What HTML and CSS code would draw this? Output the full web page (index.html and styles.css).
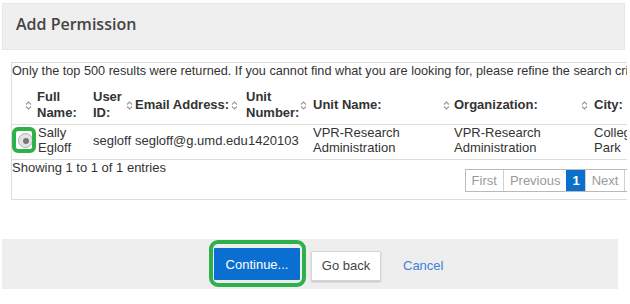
FILE: index.html
```html
<!DOCTYPE html>
<html lang="en">
<head>
    <meta charset="UTF-8">
    <meta name="viewport" content="width=device-width, initial-scale=1.0">
    <title>Add Permission</title>
    <link rel="stylesheet" href="styles.css">
</head>
<body>
    <div class="page">
        <div class="modal-header">
            <h2>Add Permission</h2>
        </div>

        <div class="modal-body">
            <div class="results">
                <p class="notice">Only the top 500 results were returned. If you cannot find what you are looking for, please refine the search criteria.</p>

                <!-- column headers -->
                <div class="table-head">
                    <span class="sort"><svg viewBox="0 0 7 11"><path d="M1 4.5 3.5 2 6 4.5M1 6.5 3.5 9 6 6.5"/></svg></span>
                    <span>Full<br>Name:</span>
                    <span>User<br>ID:</span>
                    <span class="sort"><svg viewBox="0 0 7 11"><path d="M1 4.5 3.5 2 6 4.5M1 6.5 3.5 9 6 6.5"/></svg></span>
                    <span>Email Address:</span>
                    <span class="sort"><svg viewBox="0 0 7 11"><path d="M1 4.5 3.5 2 6 4.5M1 6.5 3.5 9 6 6.5"/></svg></span>
                    <span>Unit<br>Number:</span>
                    <span class="sort"><svg viewBox="0 0 7 11"><path d="M1 4.5 3.5 2 6 4.5M1 6.5 3.5 9 6 6.5"/></svg></span>
                    <span>Unit Name:</span>
                    <span class="sort"><svg viewBox="0 0 7 11"><path d="M1 4.5 3.5 2 6 4.5M1 6.5 3.5 9 6 6.5"/></svg></span>
                    <span>Organization:</span>
                    <span class="sort"><svg viewBox="0 0 7 11"><path d="M1 4.5 3.5 2 6 4.5M1 6.5 3.5 9 6 6.5"/></svg></span>
                    <span>City:</span>
                </div>

                <div class="table-row">
                    <span class="pick"><span class="radio highlight"><span class="dot"></span></span></span>
                    <span>Sally<br>Egloff</span>
                    <span class="mid">segloff</span>
                    <span class="mid nowrap">segloff@g.umd.edu</span>
                    <span class="mid">1420103</span>
                    <span>VPR-Research<br>Administration</span>
                    <span>VPR-Research<br>Administration</span>
                    <span>College<br>Park</span>
                </div>

                <div class="table-foot">
                    <div class="info">Showing 1 to 1 of 1 entries</div>
                    <ul class="pager">
                        <li>First</li>
                        <li>Previous</li>
                        <li class="active">1</li>
                        <li>Next</li>
                        <li>Last</li>
                    </ul>
                </div>
            </div>
        </div>

        <div class="modal-footer">
            <span class="highlight wide"><button class="btn btn-primary">Continue...</button></span>
            <button class="btn btn-default">Go back</button>
            <a class="cancel" href="#">Cancel</a>
        </div>
    </div>
</body>
</html>
```

FILE: styles.css
```css
* {
    margin: 0;
    padding: 0;
    box-sizing: border-box;
}

body {
    font-family: "Liberation Sans", Arial, sans-serif;
    font-size: 13px;
    color: #333333;
    background: #ffffff;
    overflow: hidden;
}

.page {
    width: 627px;
    overflow: hidden;
}

.modal-header {
    margin: 3px 2px 0 2px;
    height: 47px;
    background: #efefef;
    border: 1px solid #e6e6e6;
    padding: 10px 0 0 13px;
}

.modal-header h2 {
    font-family: "Open Sans", sans-serif;
    font-weight: 600;
    font-size: 16px;
    line-height: 20px;
    color: #444444;
}

.modal-body {
    padding: 12px 0 0 11px;
}

.results {
    width: 653px;
    border: 1px solid #dddddd;
}

.notice {
    font-size: 12.7px;
    line-height: 16px;
    white-space: nowrap;
    overflow: hidden;
}

/* table */
.table-head {
    display: grid;
    grid-template-columns: 12px 56px 33px 9px 96px 15px 54px 13px 130px 11px 127px 13px 60px;
    align-items: center;
    padding: 10px 0 3px 13px;
    border-bottom: 1px solid #dddddd;
    font-weight: bold;
    line-height: 16px;
    white-space: nowrap;
}

.sort svg {
    display: block;
    width: 7px;
    height: 11px;
    fill: none;
    stroke: #999999;
    stroke-width: 1.1;
}

.table-row {
    display: grid;
    grid-template-columns: 26px 55px 42px 113px 65px 141px 140px 60px;
    align-items: center;
    padding-bottom: 4px;
    border-bottom: 1px solid #dddddd;
    line-height: 15px;
    white-space: nowrap;
}

.pick {
    padding: 1px 0 0 6px;
}

.radio {
    display: flex;
    align-items: center;
    justify-content: center;
    width: 15px;
    height: 15px;
    border-radius: 50%;
    border: 1px solid #b0b0b0;
    background: #e4e4e4;
}

.radio .dot {
    width: 6px;
    height: 6px;
    border-radius: 50%;
    background: #777777;
}

.table-foot {
    display: flex;
    justify-content: space-between;
    align-items: flex-start;
    padding-bottom: 7px;
    line-height: 16px;
}

.pager {
    display: flex;
    list-style: none;
    margin-top: 9px;
    border: 1px solid #b9b9b9;
    color: #9a9a9a;
}

.pager li {
    padding: 0 6px;
    line-height: 21px;
    border-left: 1px solid #d0d0d0;
}

.pager li:first-child {
    border-left: 0;
}

.pager .active {
    padding: 0 5px;
    background: #0b6fcb;
    color: #ffffff;
    font-weight: bold;
    border-left-color: #0b6fcb;
}

/* footer buttons */
.modal-footer {
    display: flex;
    align-items: center;
    margin: 39px 9px 0 2px;
    height: 50px;
    padding-left: 212px;
    background: #eeeeee;
}

.btn {
    font-family: inherit;
    font-size: 13px;
    cursor: pointer;
    border-radius: 1px;
}

.btn-primary {
    display: block;
    width: 86px;
    height: 32px;
    border: 0;
    background: #0a6fd0;
    color: #ffffff;
}

.btn-default {
    width: 70px;
    height: 30px;
    margin: 3px 0 0 11px;
    border: 1px solid #d6d6d6;
    background: #ffffff;
    color: #444444;
    box-shadow: 0 1px 2px rgba(0,0,0,0.2);
}

.cancel {
    margin: 2px 0 0 22px;
    color: #3f80d8;
    text-decoration: none;
}

/* green annotation marks */
.highlight {
    position: relative;
}

.highlight::after {
    content: "";
    position: absolute;
    left: -7px;
    top: -7px;
    right: -4px;
    bottom: -6px;
    border: 4px solid #2eb04b;
    border-radius: 6px;
}

.highlight.wide {
    display: block;
}

.highlight.wide::after {
    left: -5px;
    top: -8px;
    right: -6px;
    bottom: -7px;
    border-radius: 9px;
}
```
